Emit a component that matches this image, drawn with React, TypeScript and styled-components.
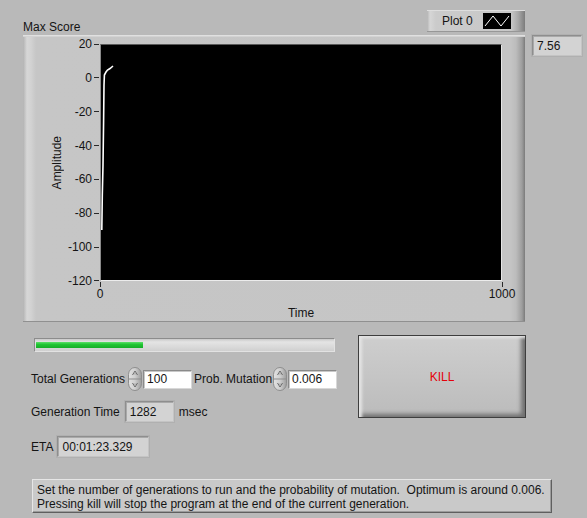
import React from "react";
import styled, { createGlobalStyle } from "styled-components";

const GlobalStyle = createGlobalStyle`
  html, body { margin: 0; padding: 0; background: #b9b9b9; }
  body {
    font-family: "Liberation Sans", Arial, sans-serif;
    font-size: 12px;
    color: #141414;
  }
`;

const Panel = styled.div`
  width: 587px;
  height: 518px;
  box-sizing: border-box;
  padding: 10px 0 0 23px;
  background: #b9b9b9;
  display: flex;
  flex-direction: column;
  overflow: hidden;
`;

const GraphArea = styled.div`
  display: grid;
  grid-template-columns: 502px 50px;
  grid-template-rows: 25px 287px;
  column-gap: 7px;
`;

const GraphHeader = styled.div`
  display: flex;
  justify-content: space-between;
  align-items: flex-start;
`;

const Caption = styled.span`
  margin-top: 10px;
  line-height: 14px;
`;

const Legend = styled.div`
  width: 98px;
  height: 22px;
  box-sizing: border-box;
  display: flex;
  align-items: center;
  padding-left: 15px;
  gap: 10px;
  background: linear-gradient(
    to right,
    #b4b4b4 0,
    #d6d6d6 3px,
    #cbcbcb 9px,
    #c8c8c8 84px,
    #a9a9a9 91px,
    #7c7c7c 98px
  );
  box-shadow: inset 0 1px 0 #dedede, inset 0 -1px 0 #979797;
`;

const LegendText = styled.span`
  line-height: 14px;
`;

const Swatch = styled.div`
  width: 28px;
  height: 16px;
  background: #000;
  display: flex;
`;

const ChartFrame = styled.div`
  display: grid;
  grid-template-columns: 27px 14px 36px 402px 23px;
  grid-template-rows: 9px 237px 41px;
  background: linear-gradient(
    to right,
    #b3b3b3 0,
    #d7d7d7 4px,
    #d2d2d2 8px,
    #c6c6c6 13px,
    #c5c5c5 487px,
    #bcbcbc 493px,
    #9d9d9d 499px,
    #7b7b7b 502px
  );
  box-shadow: inset 0 1px 0 #e0e0e0, inset 0 2px 0 #d2d2d2, inset 0 -1px 0 #909090;
`;

const AxisTitle = styled.div`
  grid-column: 2;
  grid-row: 2;
  display: flex;
  align-items: center;
  justify-content: center;
  overflow: visible;
`;

const RotatedText = styled.span`
  writing-mode: vertical-rl;
  transform: rotate(180deg);
  white-space: nowrap;
  line-height: 14px;
`;

const YAxis = styled.div`
  grid-column: 3;
  grid-row: 2;
  margin: -7px 0;
  display: flex;
  flex-direction: column;
  justify-content: space-between;
`;

const YTickRow = styled.div`
  height: 14px;
  display: flex;
  justify-content: flex-end;
  align-items: center;
  gap: 2px;
  padding-right: 1px;
  white-space: nowrap;
`;

const HTick = styled.span`
  width: 5px;
  height: 1px;
  background: #2a2a2a;
`;

const Plot = styled.div`
  grid-column: 4;
  grid-row: 2;
  box-sizing: border-box;
  background: #000;
  border-top: 1px solid #5a5a5a;
  border-left: 1px solid #8a8a8a;
  border-right: 1px solid #e6e6e6;
  border-bottom: 1px solid #ececec;
  display: flex;
`;

const XAxis = styled.div`
  grid-column: 4;
  grid-row: 3;
  display: flex;
  flex-direction: column;
  align-items: center;
`;

const XTicks = styled.div`
  align-self: stretch;
  display: flex;
  justify-content: space-between;
`;

const XTick = styled.div`
  width: 0;
  display: flex;
  flex-direction: column;
  align-items: center;
  white-space: nowrap;
`;

const VTick = styled.span`
  width: 1px;
  height: 5px;
  margin-top: 1px;
  background: #2a2a2a;
`;

const TickLabel = styled.span`
  line-height: 14px;
`;

const AxisLabel = styled.span`
  margin-top: 5px;
  line-height: 14px;
`;

const Indicator = styled.div<{ $w: number }>`
  width: ${(p) => p.$w}px;
  height: 21px;
  box-sizing: border-box;
  padding-left: 4px;
  display: flex;
  align-items: center;
  background: #d3d3d3;
  border: 1px solid;
  border-color: #8e8e8e #c4c4c4 #c4c4c4 #8e8e8e;
  box-shadow: inset 1px 1px 0 #a9a9a9, 0 0 0 1px #b0b0b0;
`;

const SideIndicator = styled(Indicator)`
  grid-column: 2;
  grid-row: 2;
  align-self: start;
`;

const ControlsArea = styled.div`
  display: flex;
  margin-top: 13px;
`;

const LeftColumn = styled.div`
  width: 335px;
  box-sizing: border-box;
  padding: 3px 0 0 8px;
  display: flex;
  flex-direction: column;
  align-items: flex-start;
`;

const ProgressTrack = styled.div`
  margin-left: 3px;
  width: 301px;
  height: 14px;
  box-sizing: border-box;
  border: 1px solid #8c8c8c;
  border-right-color: #e2e2e2;
  border-bottom-color: #e2e2e2;
  background: linear-gradient(to bottom, #c9c9c9 0, #e4e4e4 3px, #d9d9d9 8px, #cfcfcf 12px);
  padding: 3px 2px 3px 1px;
  display: flex;
`;

const ProgressFill = styled.div`
  height: 100%;
  background: linear-gradient(to bottom, #5de06a 0, #22c634 40%, #16ad27 100%);
`;

const ControlRow = styled.div<{ $top: number }>`
  margin-top: ${(p) => p.$top}px;
  display: flex;
  align-items: center;
  white-space: nowrap;
`;

const RowLabel = styled.span<{ $gap: number; $lead?: number }>`
  margin-right: ${(p) => p.$gap}px;
  margin-left: ${(p) => p.$lead ?? 0}px;
  line-height: 14px;
`;

const SpinnerBox = styled.div`
  width: 14px;
  height: 24px;
  margin-right: 1px;
  display: flex;
`;

const NumberBox = styled.div`
  width: 49px;
  height: 19px;
  box-sizing: border-box;
  margin-right: 2px;
  padding-left: 3px;
  display: flex;
  align-items: center;
  background: #fff;
  border: 1px solid;
  border-color: #8a8a8a #d8d8d8 #d8d8d8 #8a8a8a;
  box-shadow: inset 1px 1px 0 #c8c8c8;
`;

const KillButton = styled.button`
  width: 168px;
  height: 83px;
  box-sizing: border-box;
  margin: 0;
  padding: 0;
  border: 1px solid #3e3e3e;
  background: linear-gradient(to bottom, #cecece 0, #c5c5c5 50%, #bbbbbb 100%);
  box-shadow: inset 5px 4px 3px -2px #e4e4e4, inset -6px -5px 4px -2px #707070;
  color: #e5000a;
  font-family: "Liberation Sans", Arial, sans-serif;
  font-size: 12px;
  cursor: pointer;
`;

const InfoBox = styled.div`
  margin: 22px 0 0 9px;
  width: 520px;
  height: 34px;
  box-sizing: border-box;
  padding: 3px 0 0 4px;
  background: #c9c9c9;
  border: 1px solid;
  border-color: #e6e6e6 #5f5f5f #5f5f5f #e6e6e6;
  box-shadow: inset -1px -1px 0 #9c9c9c;
  line-height: 14px;
  white-space: pre;
`;

const Spinner = () => (
  <SpinnerBox>
    <svg width="14" height="24" viewBox="0 0 14 24">
      <defs>
        <linearGradient id="spg" x1="0" y1="0" x2="1" y2="0">
          <stop offset="0" stopColor="#e2e2e2" />
          <stop offset="0.5" stopColor="#cfcfcf" />
          <stop offset="1" stopColor="#9c9c9c" />
        </linearGradient>
      </defs>
      <rect x="0.5" y="0.5" width="13" height="23" rx="6.5" ry="7" fill="url(#spg)" stroke="#8d8d8d" />
      <line x1="1" y1="12" x2="13" y2="12" stroke="#8d8d8d" />
      <path d="M4.5 8 L7 4 L9.5 8" fill="none" stroke="#6a6a6a" strokeWidth="1" />
      <path d="M5.5 7.5 L7 5.2 L8.5 7.5 Z" fill="#b0b0b0" />
      <path d="M4.5 16 L7 20 L9.5 16" fill="none" stroke="#6a6a6a" strokeWidth="1" />
      <path d="M5.5 16.5 L7 18.8 L8.5 16.5 Z" fill="#b0b0b0" />
    </svg>
  </SpinnerBox>
);

const yLabels = ["20", "0", "-20", "-40", "-60", "-80", "-100", "-120"];

export default function App() {
  return (
    <Panel>
      <GlobalStyle />
      <GraphArea>
        <GraphHeader>
          <Caption>Max Score</Caption>
          <Legend>
            <LegendText>Plot 0</LegendText>
            <Swatch>
              <svg width="28" height="16" viewBox="0 0 28 16">
                <polyline points="2,13 10,3 18,13 26,3" fill="none" stroke="#fff" strokeWidth="1" />
              </svg>
            </Swatch>
          </Legend>
        </GraphHeader>
        <div />
        <ChartFrame>
          <AxisTitle>
            <RotatedText>Amplitude</RotatedText>
          </AxisTitle>
          <YAxis>
            {yLabels.map((l) => (
              <YTickRow key={l}>
                <TickLabel>{l}</TickLabel>
                <HTick />
              </YTickRow>
            ))}
          </YAxis>
          <Plot>
            <svg width="400" height="235" viewBox="0 0 400 235">
              <polyline
                points="0.8,185 1.3,150 2,120 2.6,76 3,40 3.4,30 5,27 6.5,25 9,23.5 12,21"
                fill="none"
                stroke="#fff"
                strokeWidth="1.6"
              />
            </svg>
          </Plot>
          <XAxis>
            <XTicks>
              <XTick>
                <VTick />
                <TickLabel>0</TickLabel>
              </XTick>
              <XTick>
                <VTick />
                <TickLabel>1000</TickLabel>
              </XTick>
            </XTicks>
            <AxisLabel>Time</AxisLabel>
          </XAxis>
        </ChartFrame>
        <SideIndicator $w={50}>7.56</SideIndicator>
      </GraphArea>

      <ControlsArea>
        <LeftColumn>
          <ProgressTrack>
            <ProgressFill style={{ width: `${(108 / 298) * 100}%` }} />
          </ProgressTrack>
          <ControlRow $top={15}>
            <RowLabel $gap={3}>Total Generations</RowLabel>
            <Spinner />
            <NumberBox>100</NumberBox>
            <RowLabel $gap={1}>Prob. Mutation</RowLabel>
            <Spinner />
            <NumberBox>0.006</NumberBox>
          </ControlRow>
          <ControlRow $top={10}>
            <RowLabel $gap={5}>Generation Time</RowLabel>
            <Indicator $w={49}>1282</Indicator>
            <RowLabel $gap={0} $lead={5}>msec</RowLabel>
          </ControlRow>
          <ControlRow $top={14}>
            <RowLabel $gap={4}>ETA</RowLabel>
            <Indicator $w={92}>00:01:23.329</Indicator>
          </ControlRow>
        </LeftColumn>
        <KillButton>KILL</KillButton>
      </ControlsArea>

      <InfoBox>
        {"Set the number of generations to run and the probability of mutation.  Optimum is around 0.006.\nPressing kill will stop the program at the end of the current generation."}
      </InfoBox>
    </Panel>
  );
}
